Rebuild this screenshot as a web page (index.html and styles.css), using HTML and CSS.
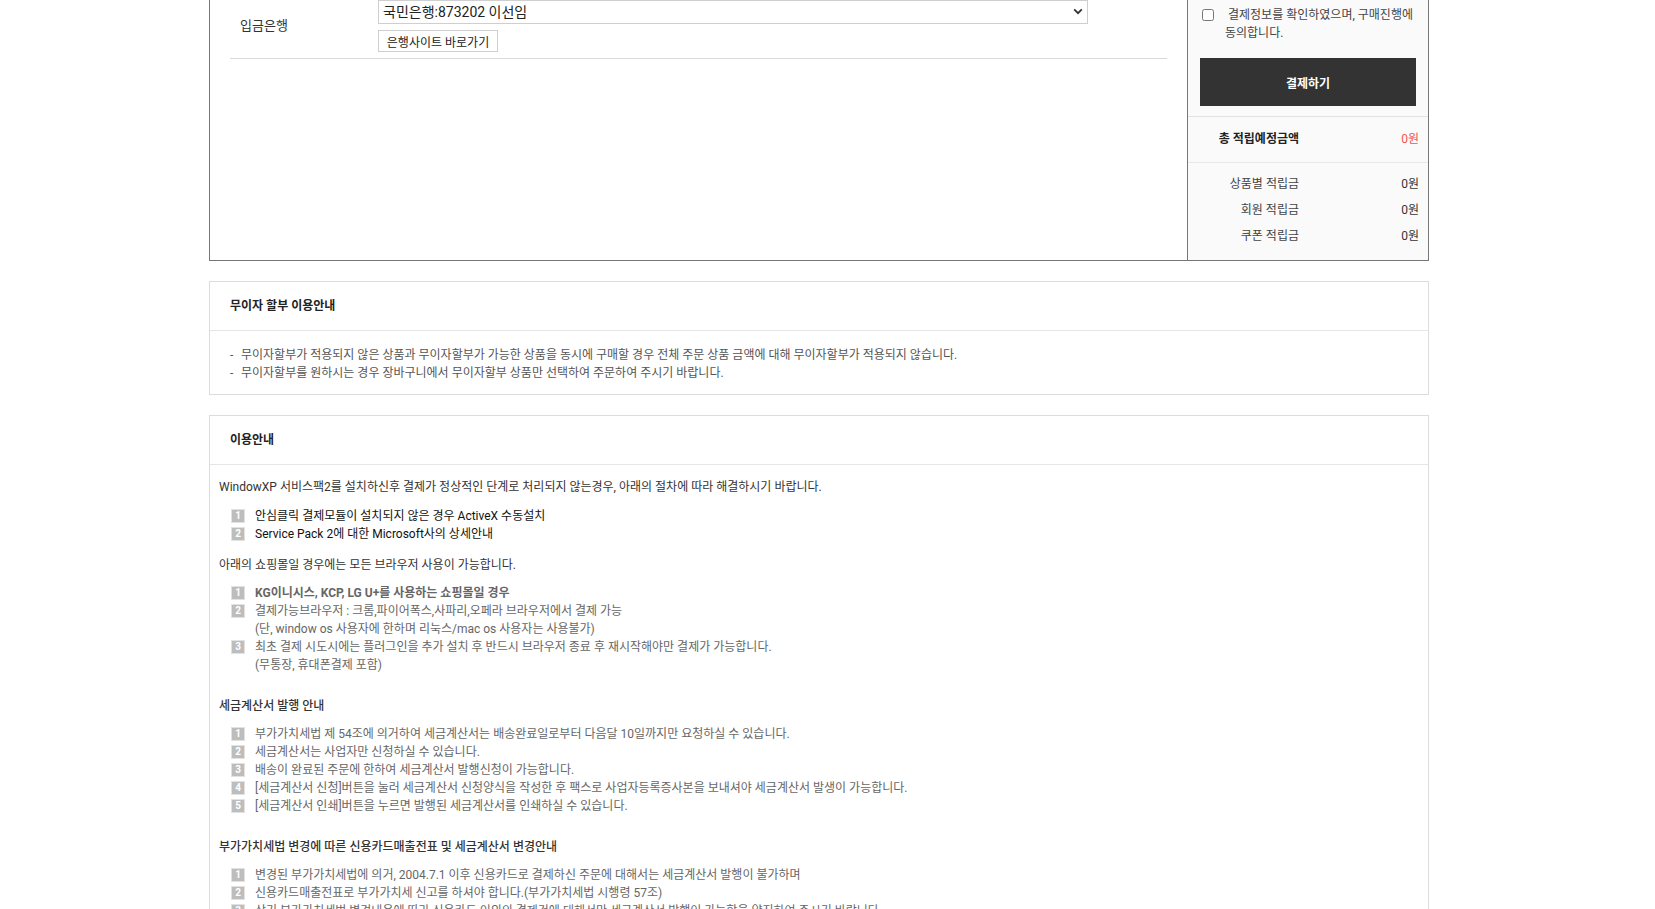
FILE: index.html
```html
<!DOCTYPE html>
<html lang="ko">
<head>
<meta charset="utf-8">
<title>주문서 작성</title>
<link rel="stylesheet" href="styles.css">
</head>
<body>
<div class="page">
  <section class="order-box">
    <div class="pay-form">
      <div class="form-row">
        <div class="form-label">입금은행</div>
        <div class="form-field">
          <div class="select-wrap">
            <select class="bank-select">
              <option>국민은행:873202 이선임</option>
            </select>
            <svg class="select-arrow" width="10" height="7" viewBox="0 0 10 7"><path d="M1.2 1.4 5 5.2 8.8 1.4" fill="none" stroke="#333" stroke-width="1.8"/></svg>
          </div>
          <button class="bank-link" type="button">은행사이트 바로가기</button>
        </div>
      </div>
    </div>
    <aside class="pay-summary">
      <div class="pay-action">
        <label class="agree">
          <input type="checkbox" class="agree-check">
          <span class="agree-text">결제정보를 확인하였으며, 구매진행에 동의합니다.</span>
        </label>
        <button class="pay-btn" type="button">결제하기</button>
      </div>
      <div class="mileage-total">
        <span class="m-label">총 적립예정금액</span>
        <span class="m-value red">0원</span>
      </div>
      <div class="mileage-list">
        <span class="m-label">상품별 적립금</span><span class="m-value">0원</span>
        <span class="m-label">회원 적립금</span><span class="m-value">0원</span>
        <span class="m-label">쿠폰 적립금</span><span class="m-value">0원</span>
      </div>
    </aside>
  </section>

  <section class="info-card">
    <h3 class="card-head">무이자 할부 이용안내</h3>
    <ul class="dash-list">
      <li>무이자할부가 적용되지 않은 상품과 무이자할부가 가능한 상품을 동시에 구매할 경우 전체 주문 상품 금액에 대해 무이자할부가 적용되지 않습니다.</li>
      <li>무이자할부를 원하시는 경우 장바구니에서 무이자할부 상품만 선택하여 주문하여 주시기 바랍니다.</li>
    </ul>
  </section>

  <section class="info-card">
    <h3 class="card-head">이용안내</h3>
    <div class="card-body">
      <p class="intro">WindowXP 서비스팩2를 설치하신후 결제가 정상적인 단계로 처리되지 않는경우, 아래의 절차에 따라 해결하시기 바랍니다.</p>
      <ol class="num-list links">
        <li><span class="num">1</span><span class="txt">안심클릭 결제모듈이 설치되지 않은 경우 ActiveX 수동설치</span></li>
        <li><span class="num">2</span><span class="txt">Service Pack 2에 대한 Microsoft사의 상세안내</span></li>
      </ol>
      <p class="intro second">아래의 쇼핑몰일 경우에는 모든 브라우저 사용이 가능합니다.</p>
      <ol class="num-list">
        <li><span class="num">1</span><span class="txt strong">KG이니시스, KCP, LG U+를 사용하는 쇼핑몰일 경우</span></li>
        <li><span class="num">2</span><span class="txt">결제가능브라우저 : 크롬,파이어폭스,사파리,오페라 브라우저에서 결제 가능<br>(단, window os 사용자에 한하며 리눅스/mac os 사용자는 사용불가)</span></li>
        <li><span class="num">3</span><span class="txt">최초 결제 시도시에는 플러그인을 추가 설치 후 반드시 브라우저 종료 후 재시작해야만 결제가 가능합니다.<br>(무통장, 휴대폰결제 포함)</span></li>
      </ol>

      <h4 class="sub-head">세금계산서 발행 안내</h4>
      <ol class="num-list">
        <li><span class="num">1</span><span class="txt">부가가치세법 제 54조에 의거하여 세금계산서는 배송완료일로부터 다음달 10일까지만 요청하실 수 있습니다.</span></li>
        <li><span class="num">2</span><span class="txt">세금계산서는 사업자만 신청하실 수 있습니다.</span></li>
        <li><span class="num">3</span><span class="txt">배송이 완료된 주문에 한하여 세금계산서 발행신청이 가능합니다.</span></li>
        <li><span class="num">4</span><span class="txt">[세금계산서 신청]버튼을 눌러 세금계산서 신청양식을 작성한 후 팩스로 사업자등록증사본을 보내셔야 세금계산서 발생이 가능합니다.</span></li>
        <li><span class="num">5</span><span class="txt">[세금계산서 인쇄]버튼을 누르면 발행된 세금계산서를 인쇄하실 수 있습니다.</span></li>
      </ol>

      <h4 class="sub-head">부가가치세법 변경에 따른 신용카드매출전표 및 세금계산서 변경안내</h4>
      <ol class="num-list">
        <li><span class="num">1</span><span class="txt">변경된 부가가치세법에 의거, 2004.7.1 이후 신용카드로 결제하신 주문에 대해서는 세금계산서 발행이 불가하며</span></li>
        <li><span class="num">2</span><span class="txt">신용카드매출전표로 부가가치세 신고를 하셔야 합니다.(부가가치세법 시행령 57조)</span></li>
        <li><span class="num">3</span><span class="txt">상기 부가가치세법 변경내용에 따라 신용카드 이외의 결제건에 대해서만 세금계산서 발행이 가능함을 양지하여 주시기 바랍니다.</span></li>
      </ol>
    </div>
  </section>
</div>
</body>
</html>
```

FILE: styles.css
```css
* { box-sizing: border-box; }

html, body {
  margin: 0;
  padding: 0;
  background: #fff;
}

body {
  font-family: Roboto, "Noto Sans CJK KR", sans-serif;
  font-size: 12px;
  line-height: 18px;
  color: #333;
}

.page {
  width: 1220px;
  margin-left: 209px;
  padding-bottom: 40px;
}

/* ---------- order box ---------- */
.order-box {
  display: flex;
  margin-top: -1px;
  border: 1px solid #777;
}

.pay-form {
  flex: 1;
  padding: 0 20px;
}

.form-row {
  display: flex;
  padding-bottom: 6px;
  border-bottom: 1px solid #d9d9d9;
}

.form-label {
  width: 148px;
  padding: 17px 0 0 10px;
  font-size: 13px;
  color: #333;
}

.form-field {
  display: flex;
  flex-direction: column;
  align-items: flex-start;
}

.select-wrap {
  position: relative;
  width: 710px;
  height: 24px;
}

.bank-select {
  appearance: none;
  -webkit-appearance: none;
  width: 100%;
  height: 24px;
  margin: 0;
  padding: 0 24px 0 4px;
  border: 1px solid #cfcfcf;
  border-radius: 0;
  background: #fff;
  font-family: Roboto, "Noto Sans CJK KR", sans-serif;
  font-size: 14px;
  color: #222;
}

.select-arrow {
  position: absolute;
  right: 5px;
  top: 8px;
  pointer-events: none;
}

.bank-link {
  margin-top: 6px;
  height: 22px;
  width: 120px;
  padding: 0;
  border: 1px solid #cfcfcf;
  background: #fff;
  font-family: Roboto, "Noto Sans CJK KR", sans-serif;
  font-size: 12px;
  color: #222;
  cursor: pointer;
}

/* ---------- summary panel ---------- */
.pay-summary {
  width: 241px;
  border-left: 1px solid #777;
  background: #fafafa;
}

.pay-action {
  padding: 6px 10px 10px 12px;
  border-bottom: 1px solid #e3e3e3;
}

.agree {
  display: flex;
  align-items: flex-start;
  padding-left: 2px;
  color: #444;
}

.agree-check {
  width: 12px;
  height: 12px;
  margin: 3px 0 0;
  flex: none;
}

.agree-text {
  margin-left: 11px;
  text-indent: 3px;
}

.pay-btn {
  display: block;
  width: 216px;
  height: 48px;
  margin-top: 16px;
  border: 0;
  background: #333;
  color: #fff;
  font-family: Roboto, "Noto Sans CJK KR", sans-serif;
  font-size: 12px;
  font-weight: bold;
}

.mileage-total,
.mileage-list {
  display: grid;
  grid-template-columns: 111px 1fr;
  padding: 12px 9px 15px 0;
}

.mileage-total {
  padding-top: 13px;
  padding-bottom: 14px;
  border-bottom: 1px solid #e8e8e8;
}

.mileage-list {
  row-gap: 8px;
}

.m-label {
  text-align: right;
  color: #444;
}

.mileage-total .m-label {
  font-weight: bold;
  color: #222;
}

.m-value {
  text-align: right;
  color: #333;
}

.m-value.red {
  color: #f5554f;
}

/* ---------- info cards ---------- */
.info-card {
  margin-top: 20px;
  border: 1px solid #dcdcdc;
  background: #fff;
}

.card-head {
  margin: 0;
  padding: 15px 20px 15px;
  border-bottom: 1px solid #e6e6e6;
  font-size: 12px;
  font-weight: bold;
  line-height: 18px;
  color: #222;
}

.dash-list {
  list-style: none;
  margin: 0;
  padding: 15px 20px 12px;
  color: #555;
}

.dash-list li {
  position: relative;
  padding-left: 11px;
}

.dash-list li::before {
  content: "-";
  position: absolute;
  left: 0;
  top: 0;
}

.card-body {
  padding: 13px 9px 30px;
}

.intro {
  margin: 0 0 11px;
  color: #333;
}

.intro.second {
  margin-top: 13px;
  margin-bottom: 10px;
}

.num-list {
  list-style: none;
  margin: 0;
  padding: 0 0 0 12px;
  color: #666;
}

.num-list li {
  display: flex;
  align-items: flex-start;
}

.num-list.links {
  color: #111;
}

.num {
  flex: none;
  display: flex;
  align-items: center;
  justify-content: center;
  width: 14px;
  height: 14px;
  margin-top: 2px;
  margin-right: 10px;
  background: #bdbdbd;
  border: 1px solid #e2e2e2;
  color: #fff;
  font-size: 10px;
  font-weight: bold;
  line-height: 1;
}

.txt.strong {
  font-weight: bold;
}

.sub-head {
  margin: 23px 0 10px;
  font-size: 12px;
  font-weight: 500;
  color: #333;
}
```
